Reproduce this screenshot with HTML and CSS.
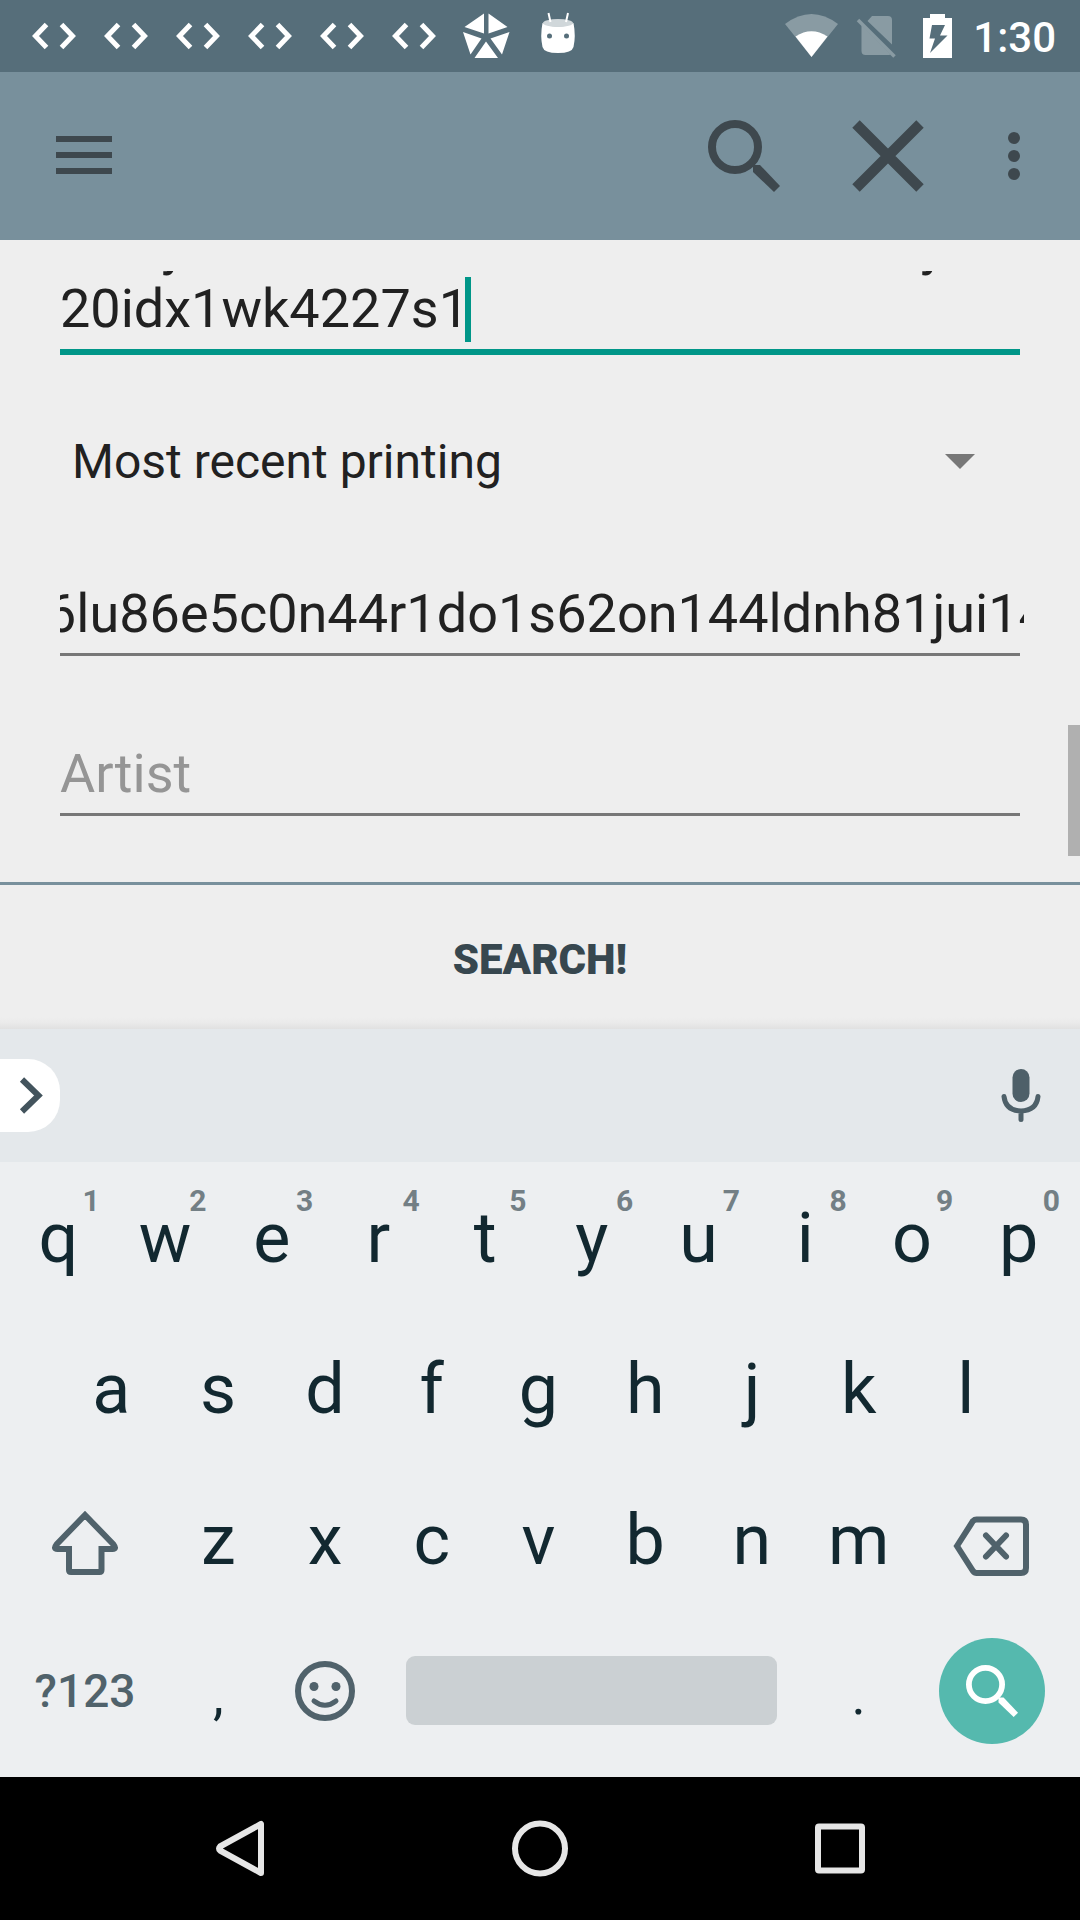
FILE: index.html
```html
<!DOCTYPE html>
<html lang="en">
<head>
<meta charset="utf-8">
<meta name="viewport" content="width=device-width">
<title>Card search</title>
<link rel="stylesheet" href="styles.css">
</head>
<body>
<svg class="sprite" aria-hidden="true">
  <symbol id="code" viewBox="0 0 72 72"><path d="M28.500 24.500L17.500 36L28.500 47.500M43.500 24.500L54.500 36L43.500 47.500" fill="none" stroke="#fff" stroke-width="5"/></symbol>
  <symbol id="magnifier" viewBox="0 0 72 72"><circle cx="27" cy="27" r="23" fill="none" stroke="currentColor" stroke-width="8"/><path d="M45 45h7L72 66L66 72L45 52z" fill="currentColor"/></symbol>
</svg>
<div class="screen">
  <div class="status">
    <div class="notices">
      <svg class="notice"><use href="#code"/></svg>
      <svg class="notice"><use href="#code"/></svg>
      <svg class="notice"><use href="#code"/></svg>
      <svg class="notice"><use href="#code"/></svg>
      <svg class="notice"><use href="#code"/></svg>
      <svg class="notice"><use href="#code"/></svg>
      <svg class="notice" viewBox="0 0 72 72" fill="#fff"><path d="M34 13.500V33.500L14.500 27zM38.500 13.500V33.500L57.500 27zM13 32L31.500 38.500L20.500 54.500zM59.500 32L40.500 38.500L52 54.500zM36 41.500L48 58H24.500z"/></svg>
      <svg class="notice" viewBox="0 0 72 72"><path d="M20.500 23Q36 30 51.500 23Q54 36 51.500 47Q50 53 36 53Q22 53 20.500 47Q18 36 20.500 23z" fill="#fff"/><ellipse cx="36" cy="23" rx="15" ry="4" fill="#d0d7da"/><path d="M26.500 13l2 9M46 13l-2 9" stroke="#fff" stroke-width="2"/><circle cx="27.500" cy="36" r="2.500" fill="#566e7a"/><circle cx="44.500" cy="36" r="2.500" fill="#566e7a"/></svg>
    </div>
    <div class="system">
      <svg class="signal" viewBox="0 0 63 72"><path d="M5 24Q31.500 4 58 24L31.500 57z" fill="#899ba3"/><path d="M15.500 36.500Q31.500 26 47.500 36.500L31.500 57z" fill="#fff"/></svg>
      <svg class="signal" viewBox="0 0 63 72" fill="#899ba3"><path d="M29 16H45Q49 16 49 20V44.500L24.500 21zM18.500 25L47.500 54.500Q46 55 45 55H22.500Q18.500 55 18.500 51z"/><path d="M15 20L51.500 56.500" stroke="#899ba3" stroke-width="3.500"/></svg>
      <svg class="signal" viewBox="0 0 63 72"><path d="M24 14H39V18H46V58H17V18H24z" fill="#fff"/><path d="M26 25H39L34 35.500H41.500L24 53L29 38.500H23.500z" fill="#566e7a"/></svg>
      <span class="time">1:30</span>
    </div>
  </div>

  <header class="appbar">
    <button class="tool menu" aria-label="Menu"><svg width="56" height="40" viewBox="0 0 56 40"><path d="M0 3H56M0 19H56M0 35H56" stroke="currentColor" stroke-width="6"/></svg></button>
    <button class="tool" aria-label="Search"><svg width="72" height="72"><use href="#magnifier"/></svg></button>
    <button class="tool" aria-label="Clear"><svg width="72" height="72" viewBox="0 0 72 72"><path d="M4 4L68 68M68 4L4 68" stroke="currentColor" stroke-width="10.500"/></svg></button>
    <button class="tool more" aria-label="More options"><svg width="12" height="48" viewBox="0 0 12 48" fill="currentColor"><circle cx="6" cy="6" r="6"/><circle cx="6" cy="24" r="6"/><circle cx="6" cy="42" r="6"/></svg></button>
  </header>

  <main class="content">
    <form class="form">
      <div class="field focused">
        <textarea class="entry" rows="2" aria-label="Flavor text">ool0j5802s4k42e08s64k307918425j2820idx1wk4227s1</textarea>
        <span class="caret"></span>
      </div>
      <div class="spinner">
        <select class="choice" aria-label="Printing"><option>Most recent printing</option></select>
        <svg class="arrow" width="30" height="15" viewBox="0 0 30 15"><path d="M0 0H30L15 15z" fill="#777"/></svg>
      </div>
      <div class="field"><input class="entry scrolled" type="text" aria-label="Watermark" value="6lu86e5c0n44r1do1s62on144ldnh81jui14"></div>
      <div class="field"><input class="entry" type="text" aria-label="Artist" placeholder="Artist"></div>
    </form>
    <div class="scrollbar"></div>
  </main>
  <button class="submit">SEARCH!</button>

  <section class="keyboard">
    <div class="strip">
      <button class="expand" aria-label="Expand"><svg width="60" height="73" viewBox="0 0 60 73"><path d="M22 20.500L38.500 36.500L22 52.500" fill="none" stroke="#43545d" stroke-width="6"/></svg></button>
      <button class="mic" aria-label="Voice input"><svg width="40" height="54" viewBox="0 0 40 54"><rect x="11.500" y="0" width="17" height="33" rx="8.500" fill="#4e6069"/><path d="M3 27.500Q4.500 41.500 20 42Q35.500 41.500 37 27.500M20 42V50.500" fill="none" stroke="#4e6069" stroke-width="5" stroke-linecap="round"/></svg></button>
    </div>
    <div class="keys">
      <div class="row">
        <button class="key">q<span class="hint">1</span></button><button class="key">w<span class="hint">2</span></button><button class="key">e<span class="hint">3</span></button><button class="key">r<span class="hint">4</span></button><button class="key">t<span class="hint">5</span></button><button class="key">y<span class="hint">6</span></button><button class="key">u<span class="hint">7</span></button><button class="key">i<span class="hint">8</span></button><button class="key">o<span class="hint">9</span></button><button class="key">p<span class="hint">0</span></button>
      </div>
      <div class="row inset">
        <button class="key">a</button><button class="key">s</button><button class="key">d</button><button class="key">f</button><button class="key">g</button><button class="key">h</button><button class="key">j</button><button class="key">k</button><button class="key">l</button>
      </div>
      <div class="row">
        <button class="key wide" aria-label="Shift"><svg width="80" height="80" viewBox="0 0 80 80"><path d="M40 15L68.500 44.500Q72 49 67.500 49H56.500V70Q56.500 72 54.500 72H26Q24 72 24 70V49H12.500Q8 49 11.500 44.500z" fill="none" stroke="currentColor" stroke-width="6"/></svg></button>
        <button class="key">z</button><button class="key">x</button><button class="key">c</button><button class="key">v</button><button class="key">b</button><button class="key">n</button><button class="key">m</button>
        <button class="key wide" aria-label="Delete"><svg width="80" height="80" viewBox="0 0 80 80" fill="none" stroke="currentColor" stroke-width="6"><path d="M5 46L21 21Q22.500 19.500 24.500 19.500H69Q74 19.500 74 24.500V68Q74 73 69 73H24.500Q22.500 73 21 71z"/><path d="M34 35.500L54 56.500M54 35.500L34 56.500" stroke-linecap="round"/></svg></button>
      </div>
      <div class="row">
        <button class="key wide symbols">?123</button>
        <button class="key punctuation">,</button>
        <button class="key" aria-label="Emoji"><svg width="60" height="60" viewBox="0 0 60 60"><circle cx="30" cy="30" r="27" fill="none" stroke="#50626b" stroke-width="6"/><circle cx="19" cy="25.500" r="4.500" fill="#50626b"/><circle cx="41" cy="25.500" r="4.500" fill="#50626b"/><path d="M19 40Q30 48.500 41 40" fill="none" stroke="#50626b" stroke-width="5" stroke-linecap="round"/></svg></button>
        <button class="key space" aria-label="Space"><span class="bar"></span></button>
        <button class="key punctuation">.</button>
        <button class="key wide" aria-label="Search"><span class="go"><svg width="52" height="52"><use href="#magnifier"/></svg></span></button>
      </div>
    </div>
  </section>

  <nav class="navbar">
    <button class="nav" aria-label="Back"><svg width="60" height="60" viewBox="0 0 60 60"><path d="M51 5V54L10 31.500Q8 29.500 10 27.500z" fill="none" stroke="#e6e6e6" stroke-width="6" stroke-linejoin="round"/></svg></button>
    <button class="nav" aria-label="Home"><svg width="60" height="60" viewBox="0 0 60 60"><circle cx="30" cy="29.500" r="25" fill="none" stroke="#e6e6e6" stroke-width="6"/></svg></button>
    <button class="nav" aria-label="Recent apps"><svg width="60" height="60" viewBox="0 0 60 60"><rect x="8" y="7.500" width="44" height="44" rx="1" fill="none" stroke="#e6e6e6" stroke-width="6"/></svg></button>
  </nav>
</div>
</body>
</html>
```
FILE: styles.css
```css
* { box-sizing: border-box; }

body {
  margin: 0;
  font-family: Roboto, "Noto Sans", sans-serif;
  background: #eee;
}

button {
  margin: 0;
  padding: 0;
  border: 0;
  background: none;
  font: inherit;
  color: inherit;
}

svg { display: block; flex: none; }
.sprite { display: block; position: absolute; width: 0; height: 0; }

.screen {
  display: flex;
  flex-direction: column;
  min-height: 100vh;
}

/* status bar */
.status {
  display: flex;
  justify-content: space-between;
  height: 72px;
  padding: 0 24px 0 18px;
  background: #566e7a;
}
.notices, .system { display: flex; align-items: center; }
.notice { width: 72px; height: 72px; }
.signal { width: 63px; height: 72px; }
.time {
  padding: 4px 0 0 4px;
  font-size: 42px;
  font-weight: 500;
  line-height: 68px;
  color: #fff;
}

/* app bar */
.appbar {
  display: flex;
  align-items: center;
  gap: 72px;
  height: 168px;
  padding: 0 60px 0 56px;
  background: #78909c;
  color: #3e484e;
}
.menu { margin-right: auto; }
.more { margin-left: 12px; }

/* search form */
.content {
  position: relative;
  flex: 1;
  padding-top: 31px;
}
.form {
  display: flex;
  flex-direction: column;
  gap: 72px;
  padding: 0 60px 66px;
  overflow: hidden;
}
.field {
  display: flex;
  position: relative;
  padding: 14px 0 8px;
  border-bottom: 3px solid #777;
}
.focused {
  margin-top: -71px;
  padding-bottom: 9px;
  border-bottom: 6px solid #009688;
}
.entry {
  flex: 1;
  min-width: 0;
  margin: 0 -4px 0 0;
  padding: 0;
  border: 0;
  outline: 0;
  resize: none;
  overflow: hidden;
  background: none;
  font: 54px/63px Roboto, "Noto Sans", sans-serif;
  color: #212121;
  word-break: break-all;
}
input.entry { height: 63px; }
.entry::placeholder { color: #959595; opacity: 1; }
.scrolled { text-indent: -14px; }
.caret {
  position: absolute;
  left: 405px;
  bottom: 7px;
  width: 6px;
  height: 65px;
  background: #009688;
}
.spinner { display: grid; align-items: center; }
.choice {
  grid-area: 1 / 1;
  height: 69px;
  padding: 0 80px 0 12px;
  border: 0;
  appearance: none;
  background: none;
  font: 48px/56px Roboto, "Noto Sans", sans-serif;
  color: #212121;
}
.arrow {
  grid-area: 1 / 1;
  justify-self: end;
  margin-right: 45px;
  pointer-events: none;
}
.scrollbar {
  position: absolute;
  right: 0;
  bottom: 26px;
  width: 12px;
  height: 131px;
  background: #b0b0b0;
}
.submit {
  height: 147px;
  padding-top: 4px;
  border-top: 3px solid #78909c;
  background: linear-gradient(#eee 132px, #ebebeb 137px, #e1e1e1 144px);
  font-size: 42px;
  font-weight: 900;
  color: #37474f;
}

/* keyboard */
.keyboard { background: #edeff1; color: #122830; }
.strip {
  display: flex;
  align-items: center;
  justify-content: space-between;
  height: 133px;
  padding-right: 39px;
  background: #e4e8eb;
}
.expand { background: #fff; border-radius: 0 32px 32px 0; }
.keys { padding: 0 8px 11px 5px; }
.row { display: flex; height: 151px; }
.inset { padding: 0 53px; }
.key {
  display: flex;
  position: relative;
  flex: 2 1 0;
  align-items: center;
  justify-content: center;
  font-size: 70px;
}
.wide { flex-grow: 3; color: #50626b; }
.symbols { font-size: 46px; font-weight: 500; }
.punctuation { padding-top: 10px; font-size: 54px; }
.hint {
  position: absolute;
  top: 21px;
  right: 12px;
  font-size: 30px;
  font-weight: 700;
  line-height: 35px;
  color: #737f85;
}
.space { flex-grow: 8; }
.bar {
  flex: 1;
  height: 69px;
  margin: 0 28px;
  border-radius: 9px;
  background: #cbd0d3;
}
.go {
  display: grid;
  place-items: center;
  width: 106px;
  height: 106px;
  border-radius: 50%;
  background: #55b9ae;
  color: #fff;
}

/* system navigation */
.navbar {
  display: flex;
  justify-content: center;
  gap: 240px;
  height: 143px;
  background: #000;
}
```
